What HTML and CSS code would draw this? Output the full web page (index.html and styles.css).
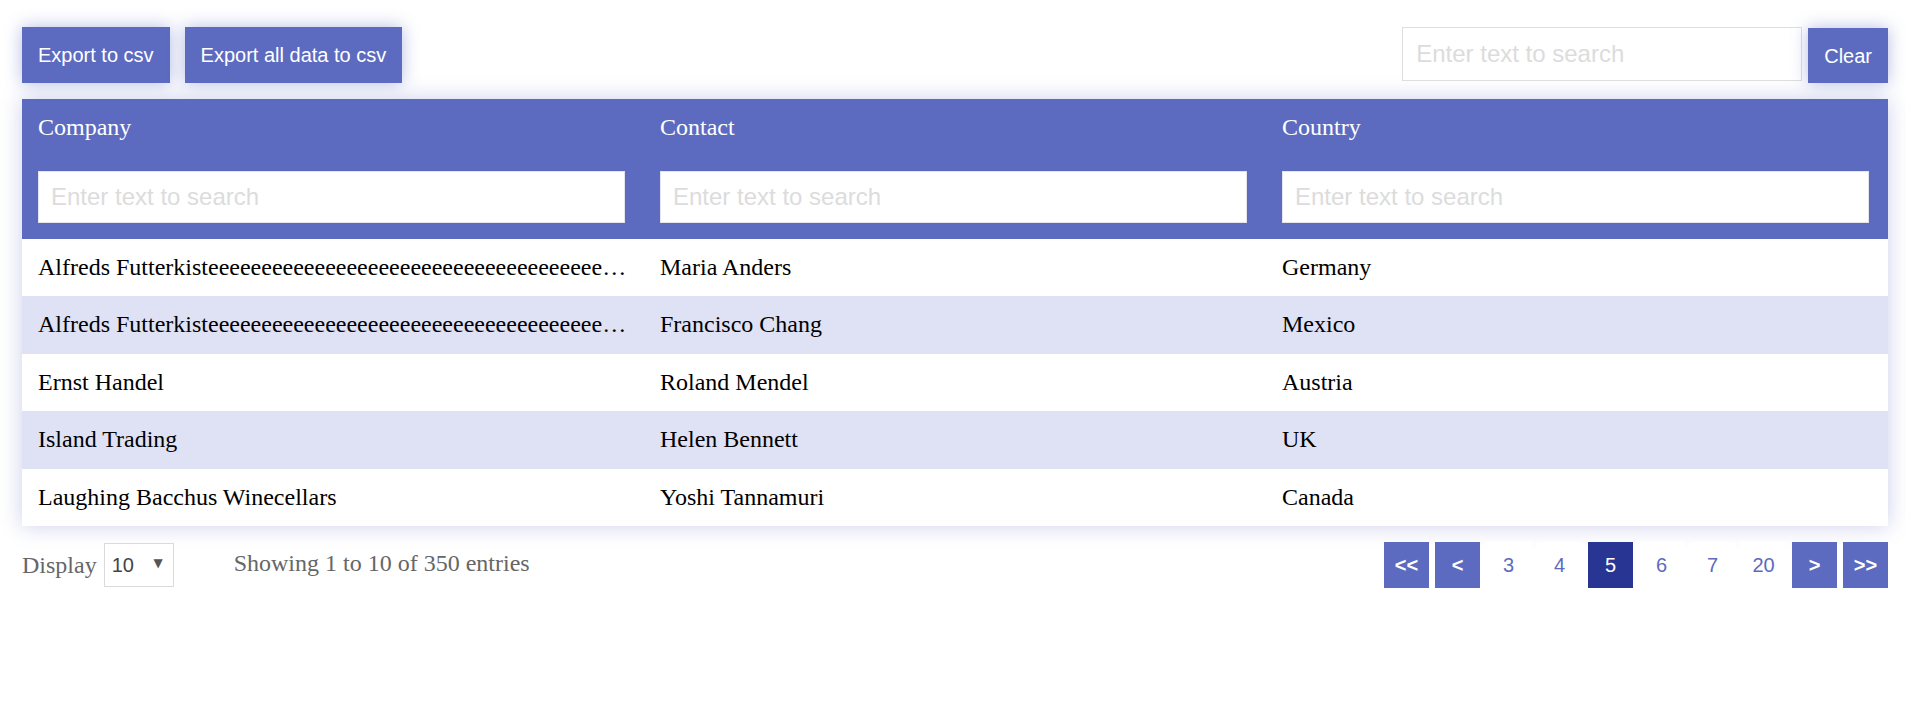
FILE: index.html
```html
<!DOCTYPE html>
<html lang="en">
<head>
<meta charset="utf-8">
<title>Data table</title>
<link rel="stylesheet" href="styles.css">
</head>
<body>
<div class="page">
  <div class="toolbar">
    <div class="actions">
      <button class="btn">Export to csv</button>
      <button class="btn">Export all data to csv</button>
    </div>
    <div class="search">
      <input class="search-input" type="text" placeholder="Enter text to search">
      <button class="btn btn-clear">Clear</button>
    </div>
  </div>

  <div class="table-card">
    <table class="grid">
      <thead>
        <tr>
          <th><div class="th-label">Company</div><input class="filter" type="text" placeholder="Enter text to search"></th>
          <th><div class="th-label">Contact</div><input class="filter" type="text" placeholder="Enter text to search"></th>
          <th><div class="th-label">Country</div><input class="filter" type="text" placeholder="Enter text to search"></th>
        </tr>
      </thead>
      <tbody>
        <tr><td>Alfreds Futterkisteeeeeeeeeeeeeeeeeeeeeeeeeeeeeeeeeeeeeeeeeeeeeeeeeeeee</td><td>Maria Anders</td><td>Germany</td></tr>
        <tr><td>Alfreds Futterkisteeeeeeeeeeeeeeeeeeeeeeeeeeeeeeeeeeeeeeeeeeeeeeeeeeeee</td><td>Francisco Chang</td><td>Mexico</td></tr>
        <tr><td>Ernst Handel</td><td>Roland Mendel</td><td>Austria</td></tr>
        <tr><td>Island Trading</td><td>Helen Bennett</td><td>UK</td></tr>
        <tr><td>Laughing Bacchus Winecellars</td><td>Yoshi Tannamuri</td><td>Canada</td></tr>
      </tbody>
    </table>
  </div>

  <div class="footer">
    <div class="footer-left">
      <span class="label">Display</span>
      <div class="select-wrap">
        <select class="page-size">
          <option>10</option>
          <option>25</option>
          <option>50</option>
        </select>
        <span class="caret">▼</span>
      </div>
      <span class="info">Showing 1 to 10 of 350 entries</span>
    </div>
    <div class="pager">
      <button class="pg pg-nav">&lt;&lt;</button>
      <button class="pg pg-nav">&lt;</button>
      <button class="pg">3</button>
      <button class="pg">4</button>
      <button class="pg pg-active">5</button>
      <button class="pg">6</button>
      <button class="pg">7</button>
      <button class="pg">20</button>
      <button class="pg pg-nav">&gt;</button>
      <button class="pg pg-nav">&gt;&gt;</button>
    </div>
  </div>
</div>
</body>
</html>
```
FILE: styles.css
```css
* { box-sizing: border-box; }

body {
  margin: 0;
  background: #ffffff;
  font-family: "Liberation Serif", "Times New Roman", serif;
  color: #000;
}

.page {
  padding: 27px 18px 0 22px;
}

.toolbar {
  display: flex;
  justify-content: space-between;
  align-items: flex-start;
  margin-bottom: 16px;
}

.actions {
  display: flex;
  gap: 15px;
}

.btn {
  font-family: "Liberation Sans", Arial, sans-serif;
  font-size: 20px;
  line-height: 24px;
  padding: 16px 16px;
  height: 56px;
  border: none;
  background: #5c6bc0;
  color: #fff;
  box-shadow: 0 0 16px rgba(92, 107, 192, 0.45);
  cursor: pointer;
}

.search {
  display: flex;
  gap: 6px;
  align-items: flex-start;
}

.search-input {
  width: 400px;
  height: 54px;
  border: 1px solid #dedede;
  padding: 0 13px;
  font-family: "Liberation Sans", Arial, sans-serif;
  font-size: 24px;
  color: #333;
  outline: none;
}

.search-input::placeholder,
.filter::placeholder {
  color: #dcdcdc;
}

.btn-clear {
  margin-top: 1px;
  height: 55px;
  padding: 0 16px;
}

.table-card {
  background: #fff;
  box-shadow: 0 0 20px rgba(92, 107, 192, 0.32);
}

.grid {
  width: 100%;
  border-collapse: collapse;
  table-layout: fixed;
  font-size: 24px;
}

.grid th {
  background: #5c6bc0;
  color: #fff;
  font-weight: normal;
  text-align: left;
  padding: 14px 19px 16px 16px;
  vertical-align: top;
}

.th-label {
  line-height: 28px;
  margin-bottom: 30px;
}

.filter {
  display: block;
  width: 100%;
  height: 52px;
  border: 1px solid #e4e4ec;
  padding: 0 12px;
  font-family: "Liberation Sans", Arial, sans-serif;
  font-size: 24px;
  outline: none;
  background: #fff;
}

.grid td {
  padding: 15px 16px;
  line-height: 27.4px;
  white-space: nowrap;
  overflow: hidden;
  text-overflow: ellipsis;
}

.grid tbody tr:nth-child(even) td {
  background: #dfe1f4;
}

.footer {
  display: flex;
  justify-content: space-between;
  align-items: flex-start;
  margin-top: 16px;
}

.footer-left {
  display: flex;
  align-items: center;
  color: #666;
  font-size: 24px;
  height: 46px;
}

.label {
  margin-right: 7px;
}

.select-wrap {
  position: relative;
  width: 70px;
  height: 44px;
}

.page-size {
  appearance: none;
  -webkit-appearance: none;
  width: 100%;
  height: 100%;
  border: 1px solid #dadada;
  background: #fff;
  padding: 0 0 0 7px;
  font-family: "Liberation Sans", Arial, sans-serif;
  font-size: 20px;
  color: #444;
  outline: none;
}

.caret {
  position: absolute;
  right: 11px;
  top: 13px;
  font-family: "DejaVu Sans", sans-serif;
  font-size: 12px;
  color: #555;
  pointer-events: none;
}

.info {
  margin-left: 60px;
  margin-top: -4px;
}

.pager {
  display: flex;
  gap: 6px;
}

.pg {
  width: 45px;
  height: 46px;
  border: none;
  background: #fff;
  color: #5c6bc0;
  font-family: "Liberation Sans", Arial, sans-serif;
  font-size: 20px;
  padding: 0;
  cursor: pointer;
}

.pg-nav {
  background: #5c6bc0;
  color: #fff;
  font-weight: bold;
}

.pg-active {
  background: #283593;
  color: #fff;
}
```
